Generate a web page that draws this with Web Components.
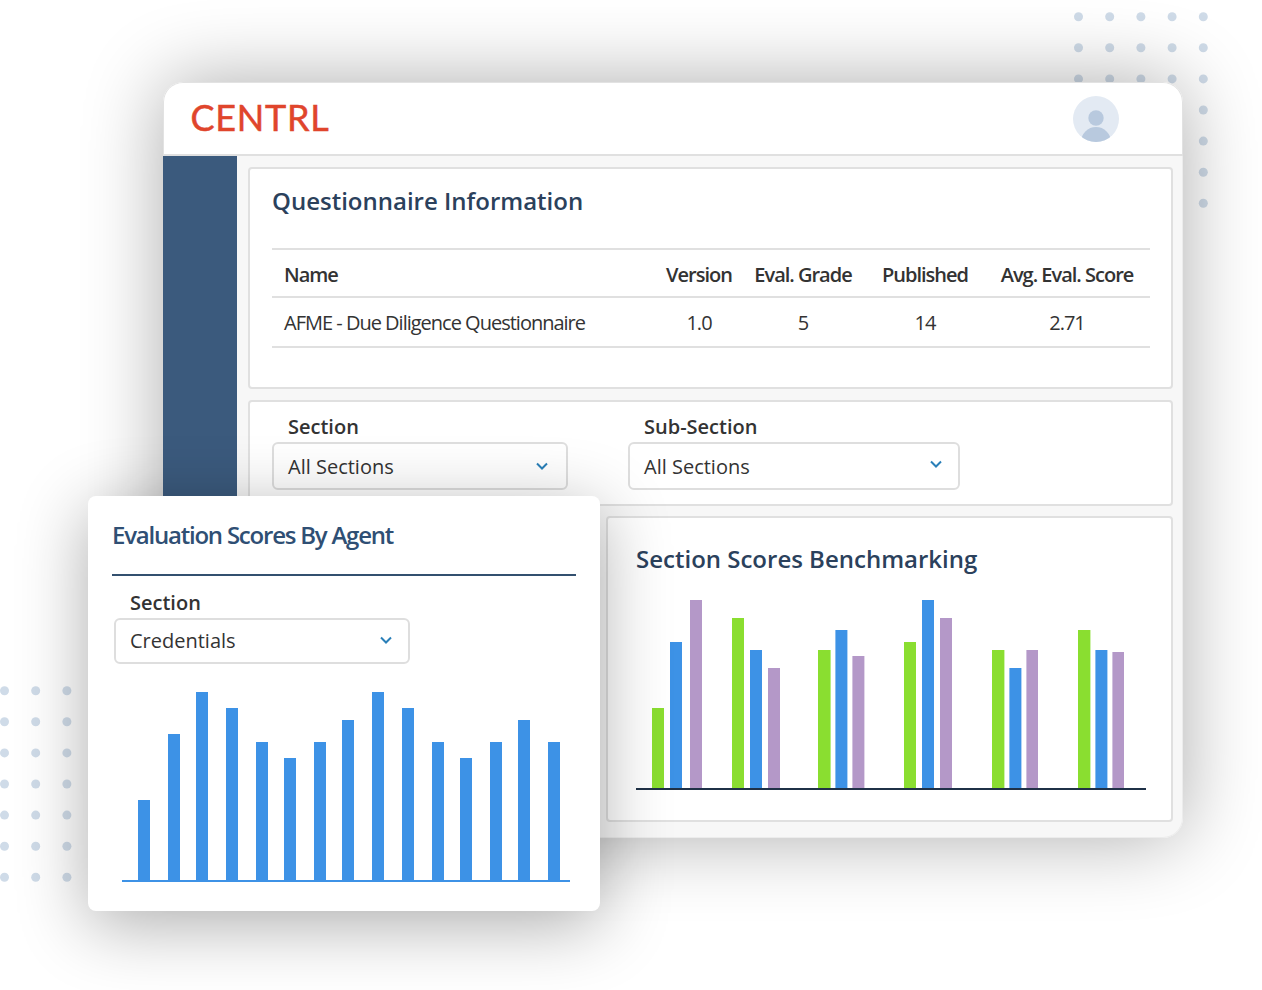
<!DOCTYPE html>
<html lang="en"><head><meta charset="utf-8"><title>CENTRL</title>
<style>
html,body{margin:0;padding:0;background:#fff}
body{font-family:"Open Sans","Liberation Sans",sans-serif;color:#333}
</style></head><body>
<app-stage>
  <dot-grid slot="dots" style="left:0;top:686px" cols="3" rows="7"></dot-grid>
  <dot-grid slot="dots" style="left:1074px;top:12px" cols="5" rows="7"></dot-grid>
  <app-window slot="window">
    <section-card style="height:222px;padding:18px 21.5px 0 22px">
      <card-title>Questionnaire Information</card-title>
      <info-table></info-table>
    </section-card>
    <section-card style="height:106px;margin-top:11px">
      <filter-bar></filter-bar>
    </section-card>
    <section-card style="height:306px;margin:10px 0 0 358px;width:567px;padding:27px 0 0 28px">
      <card-title>Section Scores Benchmarking</card-title>
      <bar-chart w="510" h="190" style="margin-top:27px" axis="#1f3147" data='[[16,708,"g"],[34,642,"b"],[54,600,"p"],[96,618,"g"],[114,650,"b"],[132,668,"p"],[182,650,"g",12.6],[199.4,630,"b",12],[216.4,656,"p",12],[268,642,"g"],[286,600,"b"],[304,618,"p"],[356,650,"g",12.4],[373.4,668,"b",12],[390.4,650,"p",11.6],[442,630,"g",12.4],[459.4,650,"b",12],[476.4,652,"p",11.6]]' base="790" top="600" axish="2"></bar-chart>
    </section-card>
  </app-window>
  <float-card slot="float"></float-card>
</app-stage>
<script>
const def=(name,html,extra)=>{customElements.define(name,class extends HTMLElement{
  constructor(){super();this.attachShadow({mode:'open'}).innerHTML=html}
  connectedCallback(){extra&&extra(this)}
})};
def('app-stage',`<style>
:host{display:block;position:relative;width:1262px;height:990px;overflow:hidden;background:#fff}
::slotted(app-window){position:absolute;left:163px;top:82px}
::slotted(float-card){position:absolute;left:88px;top:496px}
::slotted(dot-grid){position:absolute}
</style><slot name="dots"></slot><slot name="window"></slot><slot name="float"></slot>`);
const NS='http://www.w3.org/2000/svg';
def('dot-grid',`<style>:host{display:block}svg{display:block}</style><svg></svg>`,el=>{
  const c=+el.getAttribute('cols'),r=+el.getAttribute('rows'),s=el.shadowRoot.querySelector('svg');
  const W=(c-1)*31.2+10,H=(r-1)*31.1+10;s.setAttribute('width',W);s.setAttribute('height',H);
  for(let i=0;i<c;i++)for(let j=0;j<r;j++){
    const k=document.createElementNS(NS,'circle');
    k.setAttribute('cx',4.5+i*31.2);k.setAttribute('cy',4.7+j*31.1);k.setAttribute('r',4.5);k.setAttribute('fill','#cfdbe8');s.append(k);
  }
});
def('app-window',`<style>
:host{display:block;width:1020px;height:756px;box-sizing:border-box;background:#f7f7f7;border-radius:20px;box-shadow:0 0 80px rgba(0,0,0,.33)}
.clip{height:100%;border-radius:20px;overflow:hidden;display:flex;flex-direction:column}
header{box-sizing:border-box;height:74px;flex:none;background:#fff;border:1.5px solid #e2e2e2;border-top-width:1px;border-bottom:2px solid #e0e0e0;border-radius:20px 20px 0 0;display:flex;align-items:center;justify-content:space-between;padding:0 63.5px 0 26.5px}
.logo{font:400 36px/1 Lato,"Liberation Sans",sans-serif;-webkit-text-stroke:.5px #e0452c;color:#e0452c;letter-spacing:.7px;margin-top:-4px}
.body{flex:1;display:flex;min-height:0}
nav{width:74px;flex:none;background:#3b5a7d}
main{box-sizing:border-box;flex:1;padding:11px 9px 0 11px;min-width:0;border-right:1.5px solid #ececec;border-bottom:1.5px solid #ececec;border-radius:0 0 20px 0}
</style><div class="clip"><header><span class="logo">CENTRL</span>
<svg width="46" height="46" viewBox="0 0 46 46"><circle cx="23" cy="23" r="23" fill="#e3eaf3"/><clipPath id="c"><circle cx="23" cy="23" r="23"/></clipPath><g clip-path="url(#c)" fill="#b8c9de"><circle cx="23" cy="22" r="7.7"/><ellipse cx="23" cy="46" rx="15" ry="15"/></g></svg>
</header><div class="body"><nav></nav><main><slot></slot></main></div></div>`);
def('section-card',`<style>:host{display:block;box-sizing:border-box;background:#fff;border:2px solid #e0e0e0;border-radius:4px}</style><slot></slot>`);
def('card-title',`<style>:host{display:block;font:600 24px/28px "Open Sans",sans-serif;color:#2b415c}</style><slot></slot>`);
def('info-table',`<style>
:host{display:block;margin-top:33px;border-top:2px solid #e0e0e0;font:20px/24px "Open Sans",sans-serif;color:#333;letter-spacing:-1px}
.row{display:grid;grid-template-columns:378px 98px 110px 134px 150px;align-items:center;text-align:center}
.row>:first-child{text-align:left;padding-left:12px}
.h{height:46px;border-bottom:2px solid #e0e0e0;font-weight:600}
.h span{padding-top:4px}
.d{height:48px;border-bottom:2px solid #e0e0e0}
.d span{padding-top:2px}
</style>
<div class="row h"><span>Name</span><span>Version</span><span>Eval. Grade</span><span>Published</span><span>Avg. Eval. Score</span></div>
<div class="row d"><span>AFME - Due Diligence Questionnaire</span><span>1.0</span><span>5</span><span>14</span><span>2.71</span></div>`);
def('select-box',`<style>
:host{display:block;font:20px/24px "Open Sans",sans-serif;color:#333}
.l{font-weight:600;padding:0 0 2px 16px;line-height:26px;display:block}
.b{box-sizing:border-box;height:var(--box-h,46px);border:2px solid #dedede;border-radius:6px;background:#fff;display:flex;align-items:center;justify-content:space-between;padding:0 16px 0 14px}
.v{padding-top:var(--val-dy,0)}
svg{flex:none;margin-top:var(--chev-dy,-3px);margin-right:var(--chev-dx,0)}
</style><span class="l"></span><div class="b"><span class="v"></span><svg width="12" height="8" viewBox="0 0 12 8"><path d="M1 1.5 6 6.5 11 1.5" fill="none" stroke="#2a7fb8" stroke-width="2"/></svg></div>`,el=>{
  const s=el.shadowRoot;s.querySelector('.l').textContent=el.getAttribute('label');s.querySelector('.v').textContent=el.getAttribute('value');
});
def('filter-bar',`<style>
:host{display:flex;gap:60px;padding:12px 0 0 22px;--box-h:48px;--val-dy:1px}
select-box{flex:none}
.a{width:296px;--chev-dy:-1px;--chev-dx:2px}.c{width:332px;--chev-dy:-5px}
</style><select-box class="a" label="Section" value="All Sections"></select-box><select-box class="c" label="Sub-Section" value="All Sections"></select-box>`);
def('bar-chart',`<style>:host{display:block}svg{display:block}</style><svg></svg>`,el=>{
  const w=+el.getAttribute('w'),h=+el.getAttribute('h'),base=+el.getAttribute('base'),top=+el.getAttribute('top');
  const ah=+el.getAttribute('axish'),d=JSON.parse(el.getAttribute('data')),s=el.shadowRoot.querySelector('svg');
  s.setAttribute('width',w);s.setAttribute('height',h);
  const col={g:'#8ade30',b:'#3d92e6',p:'#b498c8'};
  const rect=(x,y,wd,ht,f)=>{const r=document.createElementNS(NS,'rect');for(const[k,v]of Object.entries({x,y,width:wd,height:ht,fill:f}))r.setAttribute(k,v);s.append(r)};
  for(const[x,t,c,wd]of d)rect(x,t-top,wd||12,base-t-ah,col[c]);
  rect(0,h-ah,w,ah,el.getAttribute('axis'));
});
def('float-card',`<style>
:host{display:block;box-sizing:border-box;width:512px;height:415px;background:#fff;border-radius:8px;box-shadow:0 14px 70px rgba(0,0,0,.32);padding:23px 24px 0 24px}
h2{margin:0;font:600 24px/32px "Open Sans",sans-serif;color:#2f4f74;letter-spacing:-1.22px;padding-bottom:23px;border-bottom:2px solid #33506f}
select-box{width:296px;margin:14px 0 0 2px}
bar-chart{margin:28px 0 0 10px}
</style><h2>Evaluation Scores By Agent</h2><select-box label="Section" value="Credentials"></select-box>
<bar-chart w="448" h="190" axis="#3d92e6" base="882" top="692" axish="2" data='[[16,800,"b"],[46,734,"b"],[74,692,"b"],[104,708,"b"],[134,742,"b"],[162,758,"b"],[192,742,"b"],[220,720,"b"],[250,692,"b"],[280,708,"b"],[310,742,"b"],[338,758,"b"],[368,742,"b"],[396,720,"b"],[426,742,"b"]]'></bar-chart>`);
</script></body></html>
